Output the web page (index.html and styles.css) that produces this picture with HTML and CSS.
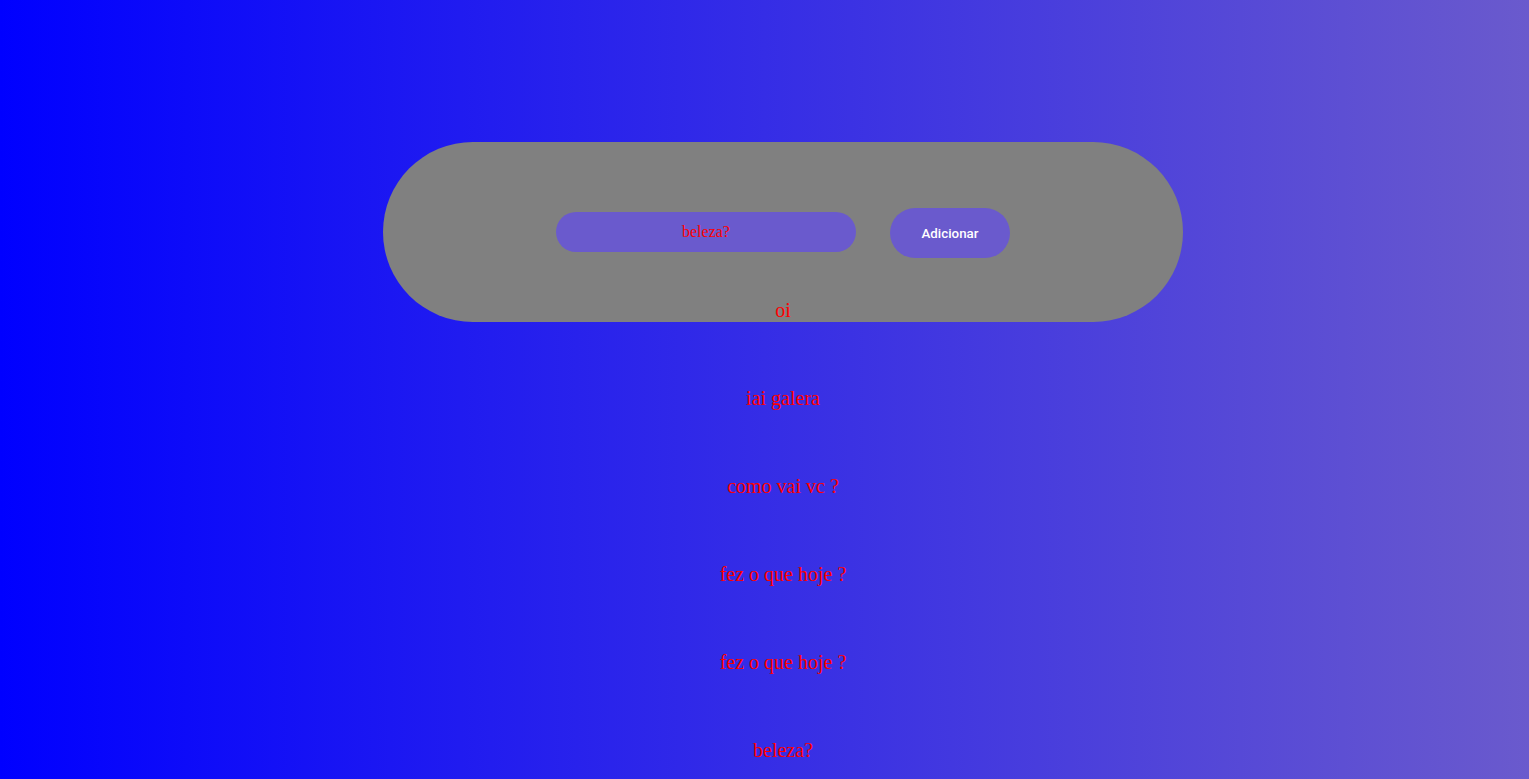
FILE: index.html
```html
<!DOCTYPE html>
<html lang="pt-BR">
<head>
<meta charset="utf-8">
<title>Lista</title>
<link rel="stylesheet" href="styles.css">
</head>
<body>
<main class="page">
  <section class="card">
    <form class="entry">
      <input class="entry-input" type="text" value="beleza?">
      <button class="entry-button" type="button">Adicionar</button>
    </form>
    <ul class="items">
      <li class="item">oi</li>
      <li class="item">iai galera</li>
      <li class="item">como vai vc ?</li>
      <li class="item">fez o que hoje ?</li>
      <li class="item">fez o que hoje ?</li>
      <li class="item">beleza?</li>
    </ul>
  </section>
</main>
</body>
</html>
```

FILE: styles.css
```css
html, body {
  margin: 0;
  padding: 0;
}

body {
  min-height: 100vh;
  background: linear-gradient(to right, #0000ff, #6a5acd);
  font-family: "Liberation Serif", "Times New Roman", serif;
  overflow: hidden;
}

.page {
  padding: 142px 0 0 37px;
}

.card {
  width: 800px;
  height: 180px;
  margin: 0 auto;
  background: #808080;
  border-radius: 90px;
  box-sizing: border-box;
  padding-top: 66px;
}

.entry {
  display: flex;
  justify-content: center;
  align-items: center;
  gap: 34px;
  margin: 0;
  height: 50px;
}

.entry-input {
  width: 300px;
  height: 40px;
  box-sizing: border-box;
  border: none;
  outline: none;
  border-radius: 20px;
  background: #6a5acd;
  color: red;
  text-align: center;
  font-family: "Liberation Serif", "Times New Roman", serif;
  font-size: 16px;
  padding: 0 10px;
  margin-bottom: 2px;
}

.entry-button {
  width: 120px;
  height: 50px;
  border: none;
  border-radius: 25px;
  background: #6a5acd;
  color: #fff;
  font-family: Roboto, "Liberation Sans", Arial, sans-serif;
  font-weight: 500;
  font-size: 13.33px;
  padding: 0;
}

.items {
  list-style: none;
  margin: 41px 0 0;
  padding: 0;
  display: flex;
  flex-direction: column;
  align-items: center;
  gap: 65px;
}

.item {
  color: red;
  font-size: 20px;
  line-height: 23px;
}
```
